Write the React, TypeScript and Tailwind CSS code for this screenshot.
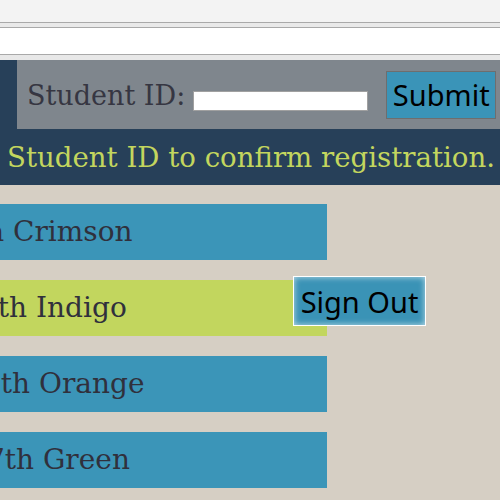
import React from "react";

const serif = { fontFamily: '"DejaVu Serif", serif' };
const sans = { fontFamily: '"Noto Sans", sans-serif' };

interface RowProps {
  prefix: string;
  name: string;
  lead: string;
  active?: boolean;
}

function ClassRow({ prefix, name, lead, active }: RowProps) {
  return (
    <div
      className={`flex h-[56px] w-[327px] items-center overflow-hidden whitespace-nowrap text-[28px] text-[#30303c] ${
        active ? "bg-[#c2d65e]" : "bg-[#3b95b8]"
      }`}
      style={serif}
    >
      <span className={`flex shrink-0 justify-end ${lead}`}>{prefix}</span>
      <span>{name}</span>
    </div>
  );
}

export default function App() {
  return (
    <div className="relative h-[500px] w-[500px] overflow-hidden bg-[#d6cfc4]">
      {/* browser-ish chrome strip */}
      <div className="h-[22px] bg-[#f3f3f3]" />
      <div className="h-[5px] border-t border-[#a9a9a9] bg-[#e9e9e9]" />
      <div className="h-[28px] border-y border-[#a9a9a9] bg-white" />
      <div className="h-[5px] bg-[#e8e8e8]" />

      <div className="h-[125px] bg-[#274059]">
        <div className="pl-[17px]">
          <div className="flex h-[69px] items-center bg-[#7f868d]">
            <label
              className="mt-[3px] shrink-0 whitespace-nowrap pl-[10px] text-[27px] text-[#363642]"
              style={serif}
            >
              Student ID:
            </label>
            <input
              type="text"
              className="ml-[8px] mt-[12px] h-[20px] w-[175px] shrink-0 border border-[#a0a0a0] bg-white"
            />
            <button
              className="ml-[18px] h-[48px] w-[110px] shrink-0 border border-[#6e6e6e] bg-[#3a94b8] text-[29px] leading-none text-black"
              style={sans}
            >
              Submit
            </button>
          </div>
        </div>
        <div
          className="flex justify-end whitespace-nowrap pr-[5px] pt-[8px] text-[27.6px] text-[#c3d65e]"
          style={serif}
        >
          <span>Please enter your Student ID to confirm registration.</span>
        </div>
      </div>

      <div className="relative flex flex-col gap-[20px] pt-[19px]">
        <ClassRow prefix={"Alpha\u00a0"} name="Crimson" lead="w-[13px]" />
        <ClassRow prefix={"5th\u00a0"} name="Indigo" lead="w-[36px]" active />
        <ClassRow prefix={"6th\u00a0"} name="Orange" lead="w-[39px]" />
        <ClassRow prefix={"17th\u00a0"} name="Green" lead="w-[43px]" />

        <button
          className="absolute left-[293px] top-[91px] h-[50px] w-[133px] border border-white bg-[#3a93b6] text-[29px] leading-none text-black shadow-[inset_0_0_6px_rgba(255,255,255,0.7)]"
          style={sans}
        >
          Sign Out
        </button>
      </div>
    </div>
  );
}
